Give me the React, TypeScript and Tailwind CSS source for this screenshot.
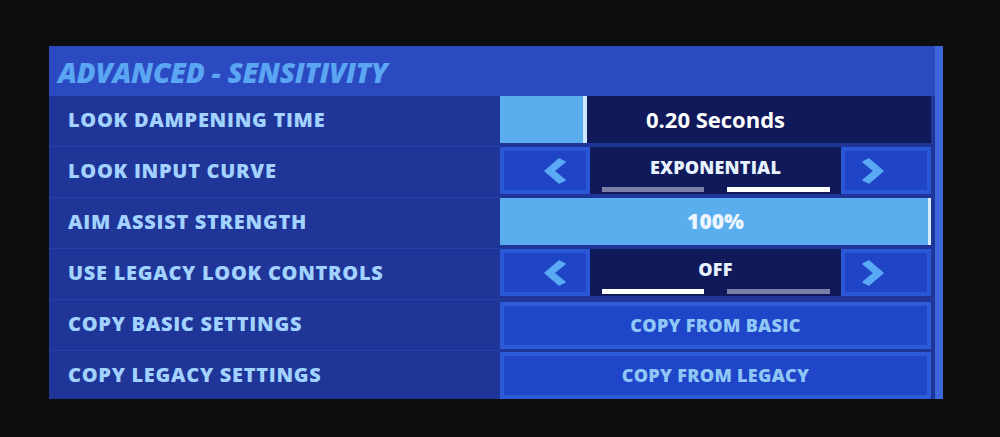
import React from 'react';

type Row =
  | { label: string; kind: 'slider'; value: string; fill: number }
  | { label: string; kind: 'choice'; value: string; index: number }
  | { label: string; kind: 'button'; value: string };

const ROWS: Row[] = [
  { label: 'LOOK DAMPENING TIME', kind: 'slider', value: '0.20 Seconds', fill: 83 },
  { label: 'LOOK INPUT CURVE', kind: 'choice', value: 'EXPONENTIAL', index: 1 },
  { label: 'AIM ASSIST STRENGTH', kind: 'slider', value: '100%', fill: 100 },
  { label: 'USE LEGACY LOOK CONTROLS', kind: 'choice', value: 'OFF', index: 0 },
  { label: 'COPY BASIC SETTINGS', kind: 'button', value: 'COPY FROM BASIC' },
  { label: 'COPY LEGACY SETTINGS', kind: 'button', value: 'COPY FROM LEGACY' },
];

const Chevron = ({ dir }: { dir: 'left' | 'right' }) => (
  <svg width="22" height="26" viewBox="0 0 22 26" className={dir === 'right' ? 'scale-x-[-1]' : ''}>
    <path d="M15 1 L21 4 L10 13 L21 22 L15 25 L1 13 Z" fill="#5aa9f4" strokeLinejoin="round" stroke="#5aa9f4" strokeWidth="1.5" />
  </svg>
);

const ArrowButton = ({ dir }: { dir: 'left' | 'right' }) => (
  <div className="w-[90px] h-full bg-[#2a57d6] p-[4px] flex">
    <div
      className={`flex-1 bg-[#1f45c6] flex items-center ${dir === 'left' ? 'justify-end pr-[20px]' : 'justify-start pl-[17px]'}`}
    >
      <Chevron dir={dir} />
    </div>
  </div>
);

// partial bar: light fill, thin handle, dark track
const Slider = ({ value, fill }: { value: string; fill: number }) => (
  <div className="relative h-[47px] w-[431px] bg-[#101a5b] flex">
    <div className="h-full bg-[#5aaeee]" style={{ width: `${fill}px` }} />
    <div className="h-full w-[4px] bg-[#cfe6ff]" />
    <div className="absolute inset-0 flex items-center justify-center text-white text-[22px] font-bold">
      {value}
    </div>
  </div>
);

const FullSlider = ({ value }: { value: string }) => (
  <div className="relative h-[47px] w-[431px] bg-[#5aaeee] flex justify-end">
    <div className="h-full w-[3px] bg-[#d7ebff]" />
    <div className="absolute inset-0 flex items-center justify-center text-[#eef6ff] text-[21px] font-extrabold">
      {value}
    </div>
  </div>
);

const Choice = ({ value, index }: { value: string; index: number }) => (
  <div className="h-[47px] w-[431px] flex">
    <ArrowButton dir="left" />
    <div className="w-[251px] h-full bg-[#101a5b] flex flex-col items-center pt-[10px]">
      <div className="text-[#e8f2ff] text-[18px] font-extrabold leading-[20px] tracking-[0.2px]">{value}</div>
      <div className="mt-[10px] flex gap-[23px]">
        <div className={`w-[102px] h-[5px] ${index === 0 ? 'bg-white' : 'bg-[#7a80a6]'}`} />
        <div className={`w-[103px] h-[5px] ${index === 1 ? 'bg-white' : 'bg-[#7a80a6]'}`} />
      </div>
    </div>
    <ArrowButton dir="right" />
  </div>
);

const CopyButton = ({ value }: { value: string }) => (
  <div className="h-[47px] w-[431px] bg-[#2c5ad8] p-[4px] flex">
    <div className="flex-1 bg-[#1f46c8] flex items-center justify-center text-[#8fc8f6] text-[18px] font-extrabold tracking-[0.3px]">
      {value}
    </div>
  </div>
);

export default function App() {
  return (
    <div
      className="w-[1000px] h-[437px] bg-[#0e0e0e] pl-[49px] pt-[46px]"
      style={{ fontFamily: '"Open Sans", "Noto Sans", sans-serif' }}
    >
      <div className="w-[894px] h-[353px] bg-[#2b4ac2] border-r-[8px] border-[#3c66dc] overflow-hidden flex flex-col">
        <div className="h-[50px] shrink-0 flex items-center pl-[9px] pt-[2px]">
          <h1 className="text-[#5aa6f2] text-[28px] italic font-extrabold tracking-[-0.3px] leading-none">
            ADVANCED - SENSITIVITY
          </h1>
        </div>
        {ROWS.map((r, i) => (
          <div key={r.label} className="h-[51px] shrink-0 flex">
            <div className="w-[451px] h-full bg-[#1f3597] border-b border-[#2542a8] flex items-center pl-[19px] pb-[3px]">
              <span className="text-[#a2d2ff] text-[20px] font-extrabold tracking-[0.7px]">{r.label}</span>
            </div>
            <div className={`flex-1 bg-[#1f3597] ${r.kind === 'button' ? (i === 5 ? 'pt-[1px]' : 'pt-[2px]') : 'pt-0'}`}>
              {r.kind === 'slider' && (r.fill === 100 ? <FullSlider value={r.value} /> : <Slider value={r.value} fill={r.fill} />)}
              {r.kind === 'choice' && <Choice value={r.value} index={r.index} />}
              {r.kind === 'button' && <CopyButton value={r.value} />}
            </div>
          </div>
        ))}
      </div>
    </div>
  );
}
